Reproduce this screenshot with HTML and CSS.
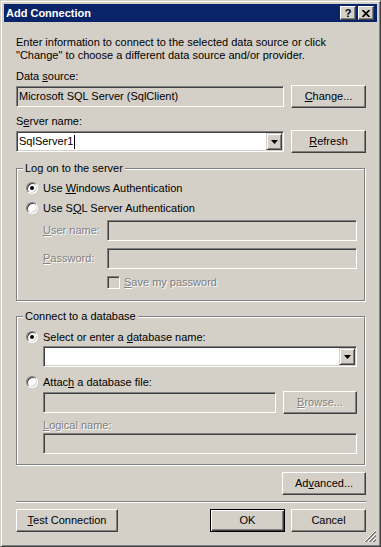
FILE: index.html
```html
<!DOCTYPE html>
<html lang="en">
<head>
  <meta charset="UTF-8">
  <title>Add Connection</title>
  <link rel="stylesheet" href="styles.css">
</head>
<body>
  <div class="window">
    <div class="titlebar">
      <span class="title">Add Connection</span>
      <div class="caption-btns">
        <button class="cap-btn help">?</button>
        <button class="cap-btn close" aria-label="Close">
          <svg width="8" height="7" viewBox="0 0 8 7"><path d="M0.5 0 L7.5 7 M7.5 0 L0.5 7" stroke="#000" stroke-width="1.7"/></svg>
        </button>
      </div>
    </div>

    <div class="dialog">
      <p class="intro">Enter information to connect to the selected data source or click<br>"Change" to choose a different data source and/or provider.</p>

      <div class="label ds-label">Data <u>s</u>ource:</div>
      <div class="row">
        <div class="field readonly grow">Microsoft SQL Server (SqlClient)</div>
        <button class="btn"><u>C</u>hange...</button>
      </div>

      <div class="label srv-label">S<u>e</u>rver name:</div>
      <div class="row">
        <div class="field combo grow">
          <span class="value">SqlServer1</span><span class="caret"></span>
          <span class="drop-btn"><svg width="7" height="4" viewBox="0 0 7 4"><polygon points="0,0 7,0 3.5,4" fill="#000"/></svg></span>
        </div>
        <button class="btn"><u>R</u>efresh</button>
      </div>

      <fieldset class="group">
        <legend class="group-title">Log on to the server</legend>
        <div class="group-body first-body">
          <div class="opt-row"><span class="radio checked"></span><span>Use <u>W</u>indows Authentication</span></div>
          <div class="opt-row"><span class="radio"></span><span>Use S<u>Q</u>L Server Authentication</span></div>
          <div class="cred-row user-row">
            <span class="cred-label disabled"><u>U</u>ser name:</span>
            <div class="field readonly grow"></div>
          </div>
          <div class="cred-row pass-row">
            <span class="cred-label disabled"><u>P</u>assword:</span>
            <div class="field readonly grow"></div>
          </div>
          <div class="check-row">
            <span class="check"></span><span class="disabled"><u>S</u>ave my password</span>
          </div>
        </div>
      </fieldset>

      <fieldset class="group second">
        <legend class="group-title">Connect to a database</legend>
        <div class="group-body second-body">
          <div class="opt-row"><span class="radio checked"></span><span>Select or enter a <u>d</u>atabase name:</span></div>
          <div class="field combo indent db-combo">
            <span class="drop-btn"><svg width="7" height="4" viewBox="0 0 7 4"><polygon points="0,0 7,0 3.5,4" fill="#000"/></svg></span>
          </div>
          <div class="opt-row attach-row"><span class="radio"></span><span>Attac<u>h</u> a database file:</span></div>
          <div class="row indent file-row">
            <div class="field readonly grow"></div>
            <button class="btn browse disabled"><u>B</u>rowse...</button>
          </div>
          <div class="label indent disabled logical-label"><u>L</u>ogical name:</div>
          <div class="field readonly indent logical-field"></div>
        </div>
      </fieldset>

      <div class="adv-row">
        <button class="btn adv">Ad<u>v</u>anced...</button>
      </div>

      <div class="separator"></div>

      <div class="footer">
        <button class="btn test"><u>T</u>est Connection</button>
        <button class="btn default">OK</button>
        <button class="btn">Cancel</button>
      </div>
    </div>

    <svg class="grip" width="12" height="12" viewBox="0 0 12 12">
      <path d="M12 0 L0 12 M12 4 L4 12 M12 8 L8 12" stroke="#fff" stroke-width="1"/>
      <path d="M12 1 L1 12 M12 2 L2 12 M12 5 L5 12 M12 6 L6 12 M12 9 L9 12 M12 10 L10 12" stroke="#808080" stroke-width="1"/>
    </svg>
  </div>
</body>
</html>
```

FILE: styles.css
```css
* { box-sizing: border-box; }
body {
  margin: 0;
  background: #d4d0c8;
  font-family: 'Liberation Sans', Arial, sans-serif;
  font-size: 11px;
  color: #000;
}
u { text-decoration-thickness: 1px; text-underline-offset: 1px; }

.window {
  position: relative;
  width: 381px;
  height: 547px;
  background: #d4d0c8;
  border: 1px solid;
  border-color: #d4d0c8 #404040 #404040 #d4d0c8;
  box-shadow: inset 1px 1px #fff, inset -1px -1px #808080;
  padding: 3px;
}

/* title bar */
.titlebar {
  height: 18px;
  background: #0a246a;
  display: flex;
  align-items: center;
  justify-content: space-between;
  padding: 0 3px 0 2px;
}
.title { color: #fff; font-weight: bold; line-height: 13px; }
.caption-btns { display: flex; gap: 2px; }
.cap-btn {
  width: 16px;
  height: 14px;
  padding: 0;
  background: #d4d0c8;
  border: 1px solid;
  border-color: #fff #404040 #404040 #fff;
  box-shadow: inset -1px -1px #808080;
  display: flex;
  align-items: center;
  justify-content: center;
  font: bold 11px 'Liberation Sans', Arial, sans-serif;
  line-height: 10px;
  color: #000;
}

/* dialog body */
.dialog { padding: 14px 11px 0 12px; line-height: 13px; }
.intro { margin: 0; }
.label { height: 13px; }
.ds-label { margin-top: 8px; }
.srv-label { margin-top: 7px; }
.row { display: flex; align-items: center; gap: 7px; margin-top: 2px; height: 23px; }
.grow { flex: 1; min-width: 0; }

.btn {
  width: 75px;
  height: 23px;
  padding: 0;
  flex: none;
  background: #d4d0c8;
  border: 1px solid;
  border-color: #fff #404040 #404040 #fff;
  box-shadow: inset -1px -1px #808080;
  font: inherit;
  line-height: 13px;
  color: #000;
}
.btn.default {
  border-color: #000;
  box-shadow: inset 1px 1px #fff, inset -1px -1px #404040, inset -2px -2px #808080;
}

.field {
  height: 21px;
  background: #fff;
  border: 1px solid;
  border-color: #808080 #fff #fff #808080;
  box-shadow: inset 1px 1px #404040, inset -1px -1px #d4d0c8;
  padding: 0 2px;
  display: flex;
  align-items: center;
  white-space: nowrap;
}
.field.readonly { background: #d4d0c8; }
.caret { width: 1px; height: 14px; background: #000; margin-left: 1px; }
.drop-btn {
  width: 16px;
  height: 17px;
  margin-left: auto;
  margin-right: -1px;
  background: #d4d0c8;
  border: 1px solid;
  border-color: #d4d0c8 #404040 #404040 #d4d0c8;
  box-shadow: inset 1px 1px #fff, inset -1px -1px #808080;
  display: flex;
  align-items: center;
  justify-content: center;
}
.drop-btn svg { display: block; }

.disabled { color: #808080; text-shadow: 1px 1px 0 #fff; }

/* group boxes */
.group {
  margin: 8px 1px 0 0;
  padding: 0 7px 11px 0;
  min-width: 0;
  border: 1px solid #808080;
  box-shadow: 1px 1px 0 #fff, inset 1px 1px 0 #fff;
}
.group.second { padding-bottom: 10px; }
.group-title {
  margin-left: 6px;
  padding: 0 2px;
  line-height: 14px;
  background: #d4d0c8;
}
.group-body { padding-left: 9px; }
.first-body { padding-top: 5px; }
.second-body { padding-top: 6px; }
.indent { margin-left: 17px; }

.opt-row { display: flex; align-items: center; gap: 5px; height: 16px; }
.opt-row + .opt-row { margin-top: 4px; }
.radio {
  width: 12px;
  height: 12px;
  flex: none;
  border-radius: 50%;
  background: #fff;
  border: 1px solid;
  border-color: #808080 #fff #fff #808080;
  box-shadow: inset 1px 1px #404040, inset -1px -1px #d4d0c8;
  display: flex;
  align-items: center;
  justify-content: center;
}
.radio.checked::after {
  content: "";
  width: 4px;
  height: 4px;
  border-radius: 50%;
  background: #000;
}

.cred-row { display: flex; align-items: center; margin-left: 17px; }
.user-row { margin-top: 4px; }
.pass-row { margin-top: 7px; }
.cred-label { width: 64px; flex: none; }
.check-row { display: flex; align-items: center; gap: 4px; margin: 7px 0 0 81px; height: 13px; }
.check {
  width: 13px;
  height: 13px;
  background: #d4d0c8;
  border: 1px solid;
  border-color: #808080 #fff #fff #808080;
  box-shadow: inset 1px 1px #404040, inset -1px -1px #d4d0c8;
}

.db-combo { margin-top: 1px; }
.attach-row { margin-top: 7px; }
.file-row { margin-top: 1px; }
.btn.browse { width: 74px; }
.logical-label { margin-top: 5px; }
.logical-field { margin-top: 1px; }

.adv-row { display: flex; justify-content: flex-end; margin-top: 7px; }
.btn.adv { width: 84px; }

.separator { margin-top: 6px; border-top: 1px solid #808080; border-bottom: 1px solid #fff; }

.footer { display: flex; gap: 6px; margin-top: 6px; }
.btn.test { width: 102px; margin-right: auto; }

.grip { position: absolute; right: 4px; bottom: 4px; }
```
